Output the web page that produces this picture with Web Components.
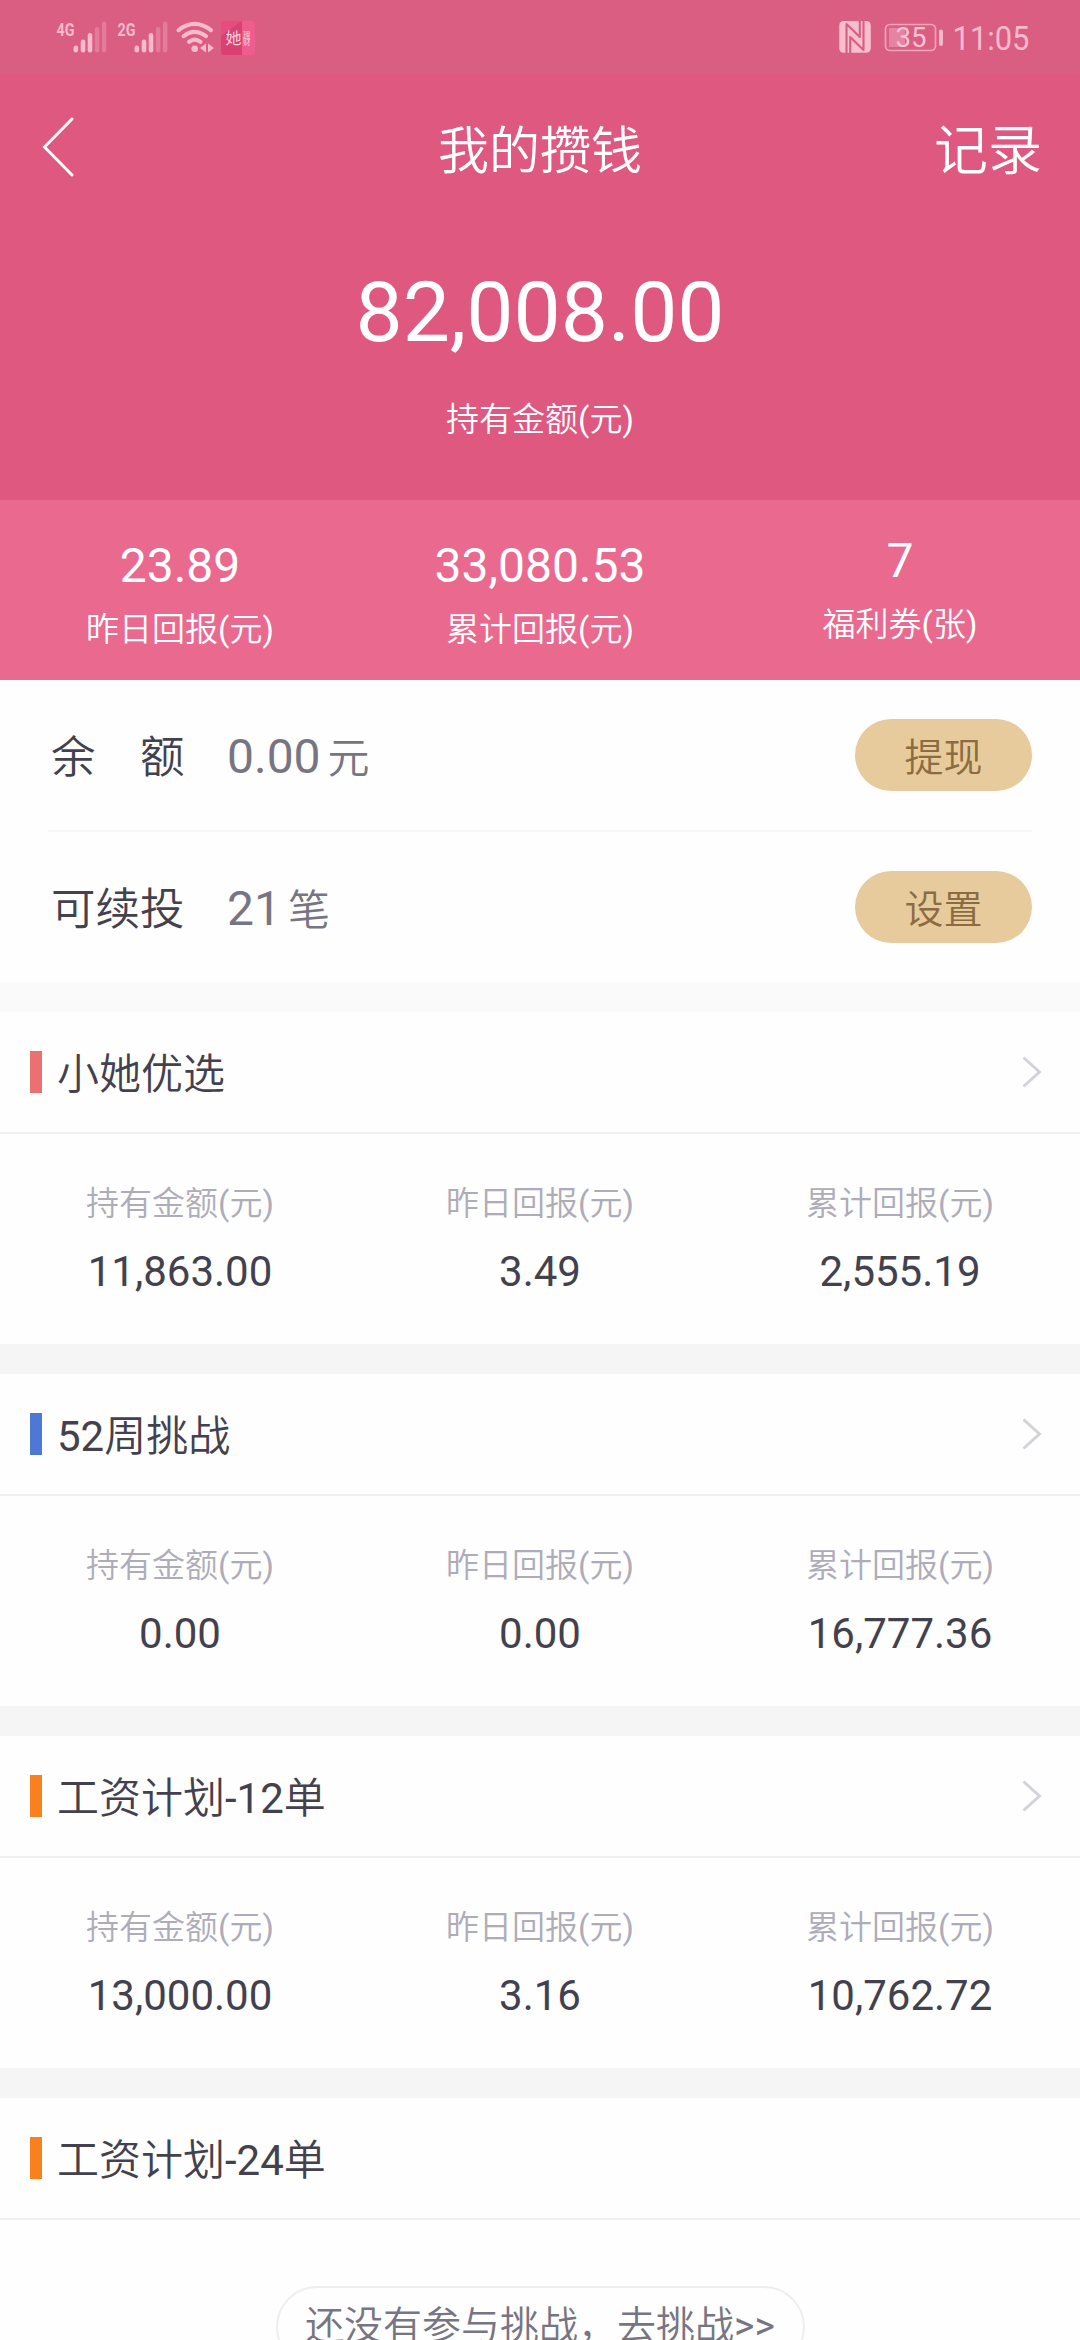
<!DOCTYPE html>
<html lang="zh-CN">
<head>
<meta charset="utf-8">
<title>我的攒钱</title>
<style>
  html, body { margin: 0; padding: 0; }
  body { width: 1080px; height: 2340px; overflow: hidden; background: #fefefe; font-family: Roboto, "Noto Sans CJK SC", sans-serif; color: #43414d; }
</style>
</head>
<body>
<savings-page></savings-page>
<script>
const define = (name, html) => {
  const tpl = document.createElement('template');
  tpl.innerHTML = html;
  customElements.define(name, class extends HTMLElement {
    constructor() {
      super();
      this.attachShadow({ mode: 'open' }).append(tpl.content.cloneNode(true));
    }
  });
};

define('status-bar', `
<style>
  :host { display: flex; justify-content: space-between; height: 74px; background: #da5d82; }
  svg { display: block; font-family: Roboto, "Noto Sans CJK SC", sans-serif; }
</style>
<svg width="300" height="74" viewBox="0 0 300 74" fill="#f9bace">
  <text x="56.500" y="35.500" font-size="19" font-weight="700" textLength="18" lengthAdjust="spacingAndGlyphs">4G</text>
  <g>
    <rect x="73.500" y="45.500" width="4.600" height="7" rx="2.200"/>
    <rect x="80.700" y="39.500" width="4.600" height="13" rx="2.200"/>
    <rect x="87.700" y="33" width="4.600" height="19.500" rx="2.200"/>
    <rect x="94.900" y="27" width="4.400" height="25.500" rx="2.200" opacity=".32"/>
    <rect x="101.900" y="21.500" width="4.400" height="31" rx="2.200" opacity=".32"/>
  </g>
  <text x="117.500" y="35.500" font-size="19" font-weight="700" textLength="18" lengthAdjust="spacingAndGlyphs">2G</text>
  <g>
    <rect x="134.500" y="45.500" width="4.600" height="7" rx="2.200"/>
    <rect x="141.700" y="39.500" width="4.600" height="13" rx="2.200"/>
    <rect x="148.700" y="33" width="4.600" height="19.500" rx="2.200"/>
    <rect x="155.900" y="27" width="4.400" height="25.500" rx="2.200" opacity=".32"/>
    <rect x="163" y="21.500" width="4.400" height="31" rx="2.200" opacity=".32"/>
  </g>
  <g fill="none" stroke="#f9bace" stroke-width="4" stroke-linecap="round">
    <path d="M178.500 30.200Q194.500 17.500 211 30.200"/>
    <path d="M183.500 36.200Q194.500 27.500 206 36.200"/>
    <path d="M189 41.800Q194.700 37.500 200.500 41.800"/>
  </g>
  <circle cx="194.700" cy="48.700" r="3.300"/>
  <path d="M206 43.500v9l-6-4.500zM208 43.500v9l6-4.500z"/>
  <rect x="221" y="21" width="34" height="34" rx="3" fill="#e94b80"/>
  <path d="M221 36L242 21v34h-18a3 3 0 0 1-3-3z" fill="#dc3f72"/>
  <path d="M242 21h10a3 3 0 0 1 3 3v28a3 3 0 0 1-3 3h-10z" fill="#ee5d8e"/>
  <text x="225.500" y="43.500" font-size="16" fill="#fbd5df">她</text>
  <text x="243" y="37.500" font-size="7.500" fill="#fbd5df">理</text>
  <text x="243" y="44.800" font-size="7.500" fill="#fbd5df">财</text>
</svg>
<svg width="260" height="74" viewBox="820 0 260 74" fill="#f5bfcf">
  <rect x="839.200" y="21" width="31.600" height="31.800" rx="4.500"/>
  <g fill="none" stroke="#da5d82" stroke-width="2.100" stroke-linejoin="round">
    <path d="M846.500 53V24L859.800 37V21"/>
    <path d="M863.500 21V50L850.200 37V53"/>
  </g>
  <rect x="885.500" y="24.500" width="50" height="26" rx="4.500" fill="none" stroke="#f2a5bd" stroke-width="1.700"/>
  <rect x="889" y="28" width="16" height="19" fill="#e683a3"/>
  <rect x="939" y="29.500" width="4" height="16.500" rx="2" fill="#f5b8ca"/>
  <text x="895.500" y="46.500" font-size="27" textLength="31" lengthAdjust="spacingAndGlyphs" fill="#fbc3d4">35</text>
  <text x="952.500" y="50" font-size="34" textLength="77" lengthAdjust="spacingAndGlyphs" fill="#f9bace">11:05</text>
</svg>`);

define('nav-bar', `
<style>
  :host { display: grid; grid-template-columns: 200px 1fr 200px; align-items: center; height: 150px; color: #fff; }
  svg { display: block; margin: 0 0 5px 42px; }
  .title { text-align: center; padding-top: 5px; font-size: 51px; line-height: 60px; font-weight: 350; }
  .action { text-align: right; padding: 6px 38px 0 0; font-size: 54px; line-height: 60px; font-weight: 350; }
</style>
<svg width="34" height="60" viewBox="0 0 34 60" fill="none" stroke="#fff" stroke-width="2.900" stroke-linecap="round"><path d="M30 2L2.500 30 30 58"/></svg>
<div class="title"><slot></slot></div>
<div class="action"><slot name="action"></slot></div>`);

define('hero-amount', `
<style>
  :host { display: flex; flex-direction: column; align-items: center; height: 276px; color: #fff; }
  .n { margin-top: 39px; font-size: 84px; line-height: 100px; }
  .l { margin-top: 37px; font-size: 33px; line-height: 40px; font-weight: 350; }
</style>
<div class="n"><slot></slot></div>
<div class="l"><slot name="label"></slot></div>`);

define('stat-strip', `
<style>
  :host { display: grid; grid-template-columns: repeat(3, 1fr); align-items: start; height: 180px; background: #ea698f; color: #fff; }
</style>
<slot></slot>`);

define('strip-stat', `
<style>
  :host { display: flex; flex-direction: column; align-items: center; padding-top: 36px; }
  .n { font-size: 48px; line-height: 60px; }
  .l { margin-top: 14px; font-size: 33px; line-height: 40px; font-weight: 350; }
</style>
<div class="n"><slot></slot></div>
<div class="l"><slot name="label"></slot></div>`);

define('balance-row', `
<style>
  :host { display: flex; align-items: center; height: 150px; margin: 0 48px; }
  .l { width: 135px; margin-left: 3px; padding-top: 5px; font-size: 44.500px; line-height: 60px; white-space: pre; font-weight: 350; }
  .v { flex: 1; display: flex; align-items: baseline; margin-left: 41px; padding-top: 5px; color: #777582; }
  .n { font-size: 48px; line-height: 60px; }
  .u { margin-left: 7px; font-size: 42px; line-height: 60px; font-weight: 350; }
  .b { width: 177px; height: 72px; border-radius: 36px; background: #e7cb9c; color: #8b6c42; text-align: center; font-size: 39px; line-height: 78px; font-weight: 350; }
</style>
<div class="l"><slot name="label"></slot></div>
<div class="v"><span class="n"><slot></slot></span><span class="u"><slot name="unit"></slot></span></div>
<div class="b"><slot name="action"></slot></div>`);

define('plan-card', `
<style>
  :host { display: block; }
  .head { display: flex; align-items: center; height: 120px; padding: 0 37px 0 30px; border-bottom: 2px solid #f0f0f1; }
  .mark { width: 12px; height: 42px; background: var(--mark); }
  .t { flex: 1; margin-left: 15px; padding-top: 6px; font-size: 42px; line-height: 50px; font-weight: 350; }
  svg { display: block; }
  :host([plain]) svg { display: none; }
  .body { display: grid; grid-template-columns: repeat(3, 1fr); height: 210px; border-bottom: 30px solid #f5f5f5; }
  ::slotted(plan-stat) { height: 160px; }
  :host([plain]) .body { display: flex; justify-content: center; align-items: flex-start; padding-top: 66px; border: 0; height: auto; }
</style>
<div class="head"><div class="mark"></div><div class="t"><slot name="title"></slot></div>
<svg width="20" height="32" viewBox="0 0 20 32" fill="none" stroke="#d3d2d9" stroke-width="2.900"><path d="M.5 1.500L16.500 16 .5 30.500"/></svg></div>
<div class="body"><slot></slot></div>`);

define('plan-stat', `
<style>
  :host { display: flex; flex-direction: column; align-items: center; padding-top: 50px; }
  .l { font-size: 33px; line-height: 40px; color: #aeacb8; font-weight: 350; }
  .n { margin-top: 23px; font-size: 42px; line-height: 50px; }
</style>
<div class="l"><slot name="label"></slot></div>
<div class="n"><slot></slot></div>`);

define('outline-pill', `
<style>
  :host { box-sizing: border-box; display: block; width: 529px; height: 82px; border: 2px solid #eeeeef; border-radius: 41px; text-align: center; white-space: nowrap; font-size: 39px; line-height: 77px; font-weight: 350; color: #777582; }
</style>
<slot></slot>`);

// Latin runs keep the regular weight beside the lighter Chinese glyphs.
const mixed = s => s.replace(/[-\d()]+|(&gt;)+/g, '<span class="lat">$&</span>');

const LABELS = ['持有金额(元)', '昨日回报(元)', '累计回报(元)'];
const PLANS = [
  ['小她优选', '#eb7072', ['11,863.00', '3.49', '2,555.19']],
  ['52周挑战', '#4d79d4', ['0.00', '0.00', '16,777.36']],
  ['工资计划-12单', '#f8801d', ['13,000.00', '3.16', '10,762.72']],
];
const planCards = PLANS.map(([title, color, values]) => `
<plan-card style="--mark:${color}"><span slot="title">${mixed(title)}</span>${values.map((v, i) => `<plan-stat><span slot="label">${mixed(LABELS[i])}</span>${v}</plan-stat>`).join('')}</plan-card>`).join('');

define('savings-page', `
<style>
  :host { display: block; }
  header { background: #df587f; }
  .lat { font-weight: 400; }
  .rule { height: 2px; margin: 0 48px; background: #f7f7f8; }
  .gap { height: 30px; background: #fafafa; }
</style>
<header>
  <status-bar></status-bar>
  <nav-bar>我的攒钱<span slot="action">记录</span></nav-bar>
  <hero-amount>82,008.00<span slot="label">${mixed('持有金额(元)')}</span></hero-amount>
</header>
<stat-strip>
  <strip-stat>23.89<span slot="label">${mixed('昨日回报(元)')}</span></strip-stat>
  <strip-stat>33,080.53<span slot="label">${mixed('累计回报(元)')}</span></strip-stat>
  <strip-stat style="padding-top:31px">7<span slot="label">${mixed('福利券(张)')}</span></strip-stat>
</stat-strip>
<balance-row><span slot="label">余　额</span>0.00<span slot="unit">元</span><span slot="action">提现</span></balance-row>
<div class="rule"></div>
<balance-row><span slot="label">可续投</span>21<span slot="unit">笔</span><span slot="action">设置</span></balance-row>
<div class="gap"></div>
${planCards}
<plan-card plain style="--mark:#f8801d"><span slot="title">${mixed('工资计划-24单')}</span><outline-pill>${mixed('还没有参与挑战，去挑战&gt;&gt;')}</outline-pill></plan-card>`);
</script>
</body>
</html>
